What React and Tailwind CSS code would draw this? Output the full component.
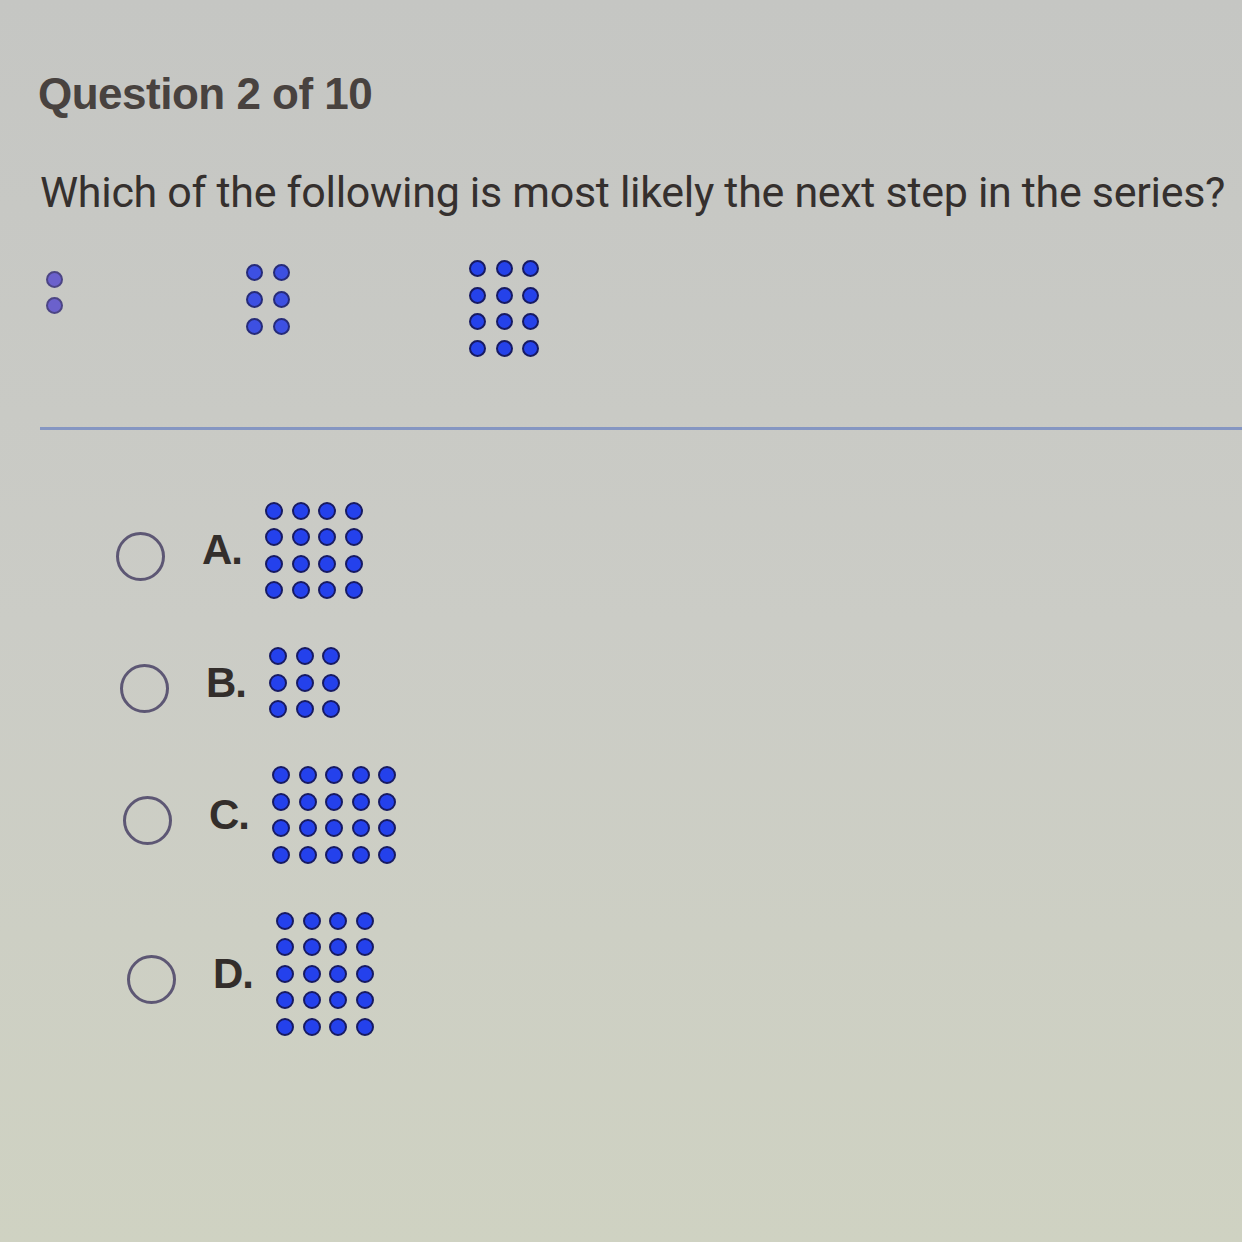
import React from "react";

function Dots({ rows, cols, size = 18, gap = 8.5, fill = "bg-[#2441ec]", ring = "border-[#171a62]" }) {
  const items = [];
  for (let i = 0; i < rows * cols; i++) {
    items.push(
      <div
        key={i}
        className={`rounded-full border-[2px] ${fill} ${ring}`}
        style={{ width: size, height: size }}
      />
    );
  }
  return (
    <div
      className="grid"
      style={{ gridTemplateColumns: `repeat(${cols}, ${size}px)`, gap: `${gap}px` }}
    >
      {items}
    </div>
  );
}

function Option({ letter, rows, cols, ml }) {
  return (
    <div className="flex items-center" style={{ marginLeft: ml }}>
      <div className="w-[49px] h-[49px] rounded-full border-[3.5px] border-[#5d5774] mt-[12px] shrink-0" />
      <div className="ml-[37px] w-[63px] shrink-0 text-[42px] leading-[42px] font-bold text-[#332e2b] tracking-[-1px] [font-family:'Liberation_Sans',Arial,sans-serif]">
        {letter}.
      </div>
      <Dots rows={rows} cols={cols} />
    </div>
  );
}

export default function App() {
  return (
    <div className="w-[1242px] h-[1242px] overflow-hidden bg-linear-to-b from-[#c5c6c3] via-[#cbccc6] to-[#cfd2c2] [font-family:'Liberation_Sans',Arial,sans-serif]">
      <div className="pt-[72px] pl-[38px] text-[44px] leading-[44px] font-bold text-[#48423f] tracking-[-0.5px]">
        Question 2 of 10
      </div>
      <div className="mt-[54px] pl-[40px] text-[43px] leading-[45px] text-[#35302e] tracking-[-0.3px] whitespace-nowrap [font-family:Roboto,'Liberation_Sans',sans-serif]">
        Which of the following is most likely the next step in the series?
      </div>
      <div className="mt-[45px] flex items-start pl-[46px]">
        <div className="mt-[11px]">
          <Dots rows={2} cols={1} size={17} gap={9} fill="bg-[#6b61cc]" ring="border-[#4c4584]" />
        </div>
        <div className="mt-[4px] ml-[183px]">
          <Dots rows={3} cols={2} size={17} gap={10} fill="bg-[#3d50e2]" ring="border-[#262b78]" />
        </div>
        <div className="ml-[179px]">
          <Dots rows={4} cols={3} size={17} gap={9.5} fill="bg-[#2542ea]" ring="border-[#171a62]" />
        </div>
      </div>
      <div className="mt-[70px] ml-[40px] h-[3px] bg-[#8596c2]" />
      <div className="mt-[72px] flex flex-col gap-[48px]">
        <Option letter="A" rows={4} cols={4} ml={116} />
        <Option letter="B" rows={3} cols={3} ml={120} />
        <Option letter="C" rows={4} cols={5} ml={123} />
        <Option letter="D" rows={5} cols={4} ml={127} />
      </div>
    </div>
  );
}
